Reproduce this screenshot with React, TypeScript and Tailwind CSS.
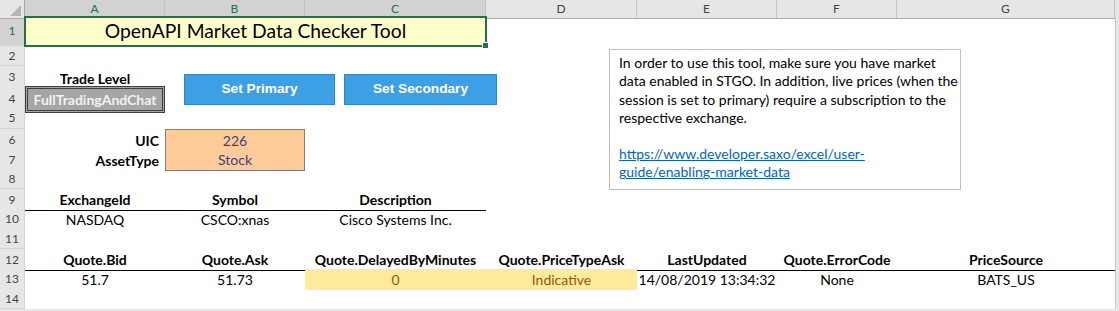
import React from "react";

const COLS = "grid grid-cols-[25px_140px_140px_181px_151px_140px_120px_218px_4px]";

const font = { fontFamily: "Lato, 'Open Sans', sans-serif" };

function RowHead({ n, active }: { n: number; active?: boolean }) {
  return (
    <div
      className={
        "flex items-center justify-center border-r border-b border-[#d4d4d4] text-[12px] " +
        (active ? "bg-[#d2d2d2] text-[#217346]" : "bg-[#e6e6e6] text-[#444]")
      }
    >
      {n}
    </div>
  );
}

function C({ children, className = "" }: { children?: React.ReactNode; className?: string }) {
  return <div className={"flex items-center justify-center whitespace-nowrap overflow-visible " + className}>{children}</div>;
}

function Scroll() {
  return <div className="bg-[#e6e6e6] border-l border-[#c6c6c6]" />;
}

export default function App() {
  const colHeads = [
    { l: "A", sel: true },
    { l: "B", sel: true },
    { l: "C", sel: true },
    { l: "D" },
    { l: "E" },
    { l: "F" },
    { l: "G" },
  ];

  const noteLines = [
    "In order to use this tool, make sure you have market",
    "data enabled in STGO. In addition, live prices (when the",
    "session is set to primary) require a subscription to the",
    "respective exchange.",
  ];

  return (
    <div className="relative w-[1119px] h-[311px] bg-white overflow-hidden text-[14px] text-black" style={font}>
      {/* column headers */}
      <div className={COLS + " h-[17px]"}>
        <div className="relative bg-[#e6e6e6] border-r border-b border-[#ababab]">
          <svg className="absolute right-[3px] bottom-[2px]" width="11" height="11" viewBox="0 0 11 11">
            <polygon points="11,0 11,11 0,11" fill="#b5b5b5" />
          </svg>
        </div>
        {colHeads.map((h) => (
          <div
            key={h.l}
            className={
              "flex items-center justify-center border-r border-b border-[#ababab] text-[12px] " +
              (h.sel ? "bg-[#d2d2d2] text-[#217346] border-r-[#c4c4c4]" : "bg-[#e6e6e6] text-[#444] border-r-[#c4c4c4]")
            }
          >
            {h.l}
          </div>
        ))}
        <div className="bg-[#e6e6e6] border-b border-[#ababab]" />
      </div>

      {/* row 1 */}
      <div className={COLS + " h-[29px]"}>
        <RowHead n={1} active />
        <C className="col-span-3 bg-[#ffffcc] text-[19.3px]">OpenAPI Market Data Checker Tool</C>
        <div />
        <div />
        <div />
        <div />
        <Scroll />
      </div>

      {/* row 2 */}
      <div className={COLS + " h-[20px]"}>
        <RowHead n={2} />
        <div /><div /><div /><div /><div /><div /><div />
        <Scroll />
      </div>

      {/* row 3 */}
      <div className={COLS + " h-[20px]"}>
        <RowHead n={3} />
        <C className="font-bold pt-[2px]">Trade Level</C>
        <div /><div /><div /><div /><div /><div />
        <Scroll />
      </div>

      {/* row 4 */}
      <div className={COLS + " h-[22px]"}>
        <RowHead n={4} />
        <div className="p-0">
          <div className="h-full flex items-center justify-center bg-[#a5a5a5] border-[3px] border-double border-[#3f3f3f] text-[#f2f2f2] font-bold">
            FullTradingAndChat
          </div>
        </div>
        <div /><div /><div /><div /><div /><div />
        <Scroll />
      </div>

      {/* row 5 */}
      <div className={COLS + " h-[21px]"}>
        <RowHead n={5} />
        <div /><div /><div /><div /><div /><div /><div />
        <Scroll />
      </div>

      {/* row 6 */}
      <div className={COLS + " h-[20px]"}>
        <RowHead n={6} />
        <C className="justify-end pr-[6px] font-bold">UIC</C>
        <C className="bg-[#ffcc99] text-[#3f3f76] border border-[#7f7f7f]">226</C>
        <div /><div /><div /><div /><div />
        <Scroll />
      </div>

      {/* row 7 */}
      <div className={COLS + " h-[20px]"}>
        <RowHead n={7} />
        <C className="justify-end pr-[6px] font-bold">AssetType</C>
        <C className="bg-[#ffcc99] text-[#3f3f76] border border-t-0 border-[#7f7f7f]">Stock</C>
        <div /><div /><div /><div /><div />
        <Scroll />
      </div>

      {/* row 8 */}
      <div className={COLS + " h-[20px]"}>
        <RowHead n={8} />
        <div /><div /><div /><div /><div /><div /><div />
        <Scroll />
      </div>

      {/* row 9 */}
      <div className={COLS + " h-[20px]"}>
        <RowHead n={9} />
        <C className="font-bold border-b border-black">ExchangeId</C>
        <C className="font-bold border-b border-black">Symbol</C>
        <C className="font-bold border-b border-black">Description</C>
        <div /><div /><div /><div />
        <Scroll />
      </div>

      {/* row 10 */}
      <div className={COLS + " h-[20px]"}>
        <RowHead n={10} />
        <C>NASDAQ</C>
        <C>CSCO:xnas</C>
        <C>Cisco Systems Inc.</C>
        <div /><div /><div /><div />
        <Scroll />
      </div>

      {/* row 11 */}
      <div className={COLS + " h-[20px]"}>
        <RowHead n={11} />
        <div /><div /><div /><div /><div /><div /><div />
        <Scroll />
      </div>

      {/* row 12 */}
      <div className={COLS + " h-[20px]"}>
        <RowHead n={12} />
        <C className="font-bold border-b border-black">Quote.Bid</C>
        <C className="font-bold border-b border-black">Quote.Ask</C>
        <C className="font-bold border-b border-black">Quote.DelayedByMinutes</C>
        <C className="font-bold border-b border-black">Quote.PriceTypeAsk</C>
        <C className="font-bold border-b border-black">LastUpdated</C>
        <C className="font-bold border-b border-black">Quote.ErrorCode</C>
        <C className="font-bold border-b border-black">PriceSource</C>
        <Scroll />
      </div>

      {/* row 13 */}
      <div className={COLS + " h-[20px]"}>
        <RowHead n={13} />
        <C>51.7</C>
        <C>51.73</C>
        <C className="bg-[#ffeb9c] text-[#9c5700]">0</C>
        <C className="bg-[#ffeb9c] text-[#9c5700]">Indicative</C>
        <C>14/08/2019 13:34:32</C>
        <C>None</C>
        <C>BATS_US</C>
        <Scroll />
      </div>

      {/* row 14 */}
      <div className={COLS + " h-[20px]"}>
        <RowHead n={14} />
        <div /><div /><div /><div /><div /><div /><div />
        <Scroll />
      </div>
      <div className="h-[2px] bg-[#e6e6e6]" />

      {/* selection around merged A1:C1 */}
      <div className="absolute left-[24px] top-[16px] w-[463px] h-[31px] border-2 border-[#217346] pointer-events-none" />
      <div className="absolute left-[482px] top-[42px] w-[7px] h-[7px] bg-[#217346] border border-white" />

      {/* macro buttons */}
      <div className="absolute left-[184px] top-[74px] w-[151px] h-[31px] bg-[#3d9fe4] border border-[#2f86c6] flex items-center justify-center text-white font-bold text-[13.7px]" style={{ fontFamily: "'Liberation Sans', Arial, sans-serif" }}>
        Set Primary
      </div>
      <div className="absolute left-[344px] top-[74px] w-[153px] h-[31px] bg-[#3d9fe4] border border-[#2f86c6] flex items-center justify-center text-white font-bold text-[13.7px]" style={{ fontFamily: "'Liberation Sans', Arial, sans-serif" }}>
        Set Secondary
      </div>

      {/* note text box */}
      <div className="absolute left-[609px] top-[49px] w-[352px] h-[141px] bg-white border border-[#bfbfbf] pl-[9px] pt-[4px] text-[14px] leading-[18.3px] whitespace-nowrap">
        {noteLines.map((l) => (
          <div key={l}>{l}</div>
        ))}
        <div className="mt-[18px] text-[#0563c1] underline">
          <div>https://www.developer.saxo/excel/user-</div>
          <div>guide/enabling-market-data</div>
        </div>
      </div>
    </div>
  );
}
